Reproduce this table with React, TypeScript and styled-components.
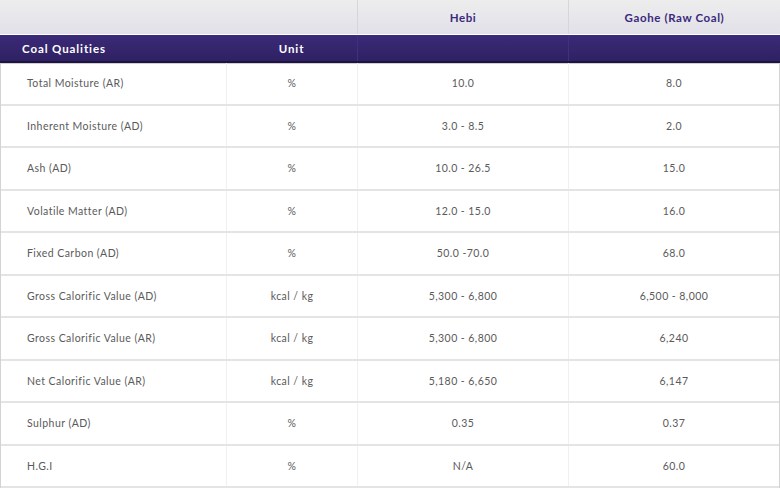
import React from "react";
import styled, { createGlobalStyle } from "styled-components";

const Global = createGlobalStyle`
  html, body { margin: 0; padding: 0; background: #ffffff; }
  body { font-family: "Lato", "Open Sans", sans-serif; }
`;

const cols = "226px 131px 211px 1fr";

const Table = styled.div`
  width: 780px;
  display: flex;
  flex-direction: column;
`;

const TopRow = styled.div`
  display: grid;
  grid-template-columns: ${cols};
  height: 34px;
  background: linear-gradient(#ededed, #e2e0e9);
  border-bottom: 1px solid #ffffff;
`;

const TopCell = styled.div<{ $divider?: boolean }>`
  display: flex;
  align-items: center;
  justify-content: center;
  font-size: 11.5px;
  font-weight: 700;
  color: #3a2a7c;
  letter-spacing: 0.6px;
  border-left: ${(p) => (p.$divider ? "1px solid #d6d4de" : "none")};
`;

const Band = styled.div`
  display: grid;
  grid-template-columns: ${cols};
  height: 26px;
  background: linear-gradient(#3b2a78, #2f2163);
  border-bottom: 2px solid #1d1442;
  box-shadow: 0 1px 0 #cfcfcf;
`;

const BandCell = styled.div<{ $align?: "left" | "center"; $divider?: boolean }>`
  display: flex;
  align-items: center;
  justify-content: ${(p) => (p.$align === "left" ? "flex-start" : "center")};
  padding-left: ${(p) => (p.$align === "left" ? "22px" : "0")};
  font-size: 11.5px;
  font-weight: 700;
  color: #ffffff;
  letter-spacing: 0.9px;
  border-left: ${(p) => (p.$divider ? "1px solid #3f3080" : "none")};
`;

const Body = styled.div`
  display: flex;
  flex-direction: column;
  border-left: 1px solid #d4d4d4;
  border-right: 1px solid #d4d4d4;
`;

const Row = styled.div`
  display: grid;
  grid-template-columns: 225px 131px 211px 1fr;
  height: 40.5px;
  border-bottom: 2px solid #e4e4e4;
`;

const Cell = styled.div<{ $align?: "left" | "center"; $divider?: boolean }>`
  display: flex;
  align-items: center;
  justify-content: ${(p) => (p.$align === "left" ? "flex-start" : "center")};
  padding-left: ${(p) => (p.$align === "left" ? "26px" : "0")};
  font-size: 10.5px;
  color: #5a5a5a;
  letter-spacing: 0.45px;
  border-left: ${(p) => (p.$divider ? "1px solid #f0f0f0" : "none")};
`;

const rows: [string, string, string, string][] = [
  ["Total Moisture (AR)", "%", "10.0", "8.0"],
  ["Inherent Moisture (AD)", "%", "3.0 - 8.5", "2.0"],
  ["Ash (AD)", "%", "10.0 - 26.5", "15.0"],
  ["Volatile Matter (AD)", "%", "12.0 - 15.0", "16.0"],
  ["Fixed Carbon (AD)", "%", "50.0 -70.0", "68.0"],
  ["Gross Calorific Value (AD)", "kcal / kg", "5,300 - 6,800", "6,500 - 8,000"],
  ["Gross Calorific Value (AR)", "kcal / kg", "5,300 - 6,800", "6,240"],
  ["Net Calorific Value (AR)", "kcal / kg", "5,180 - 6,650", "6,147"],
  ["Sulphur (AD)", "%", "0.35", "0.37"],
  ["H.G.I", "%", "N/A", "60.0"],
];

export default function App() {
  return (
    <>
      <Global />
      <Table>
        <TopRow>
          <TopCell />
          <TopCell />
          <TopCell $divider>Hebi</TopCell>
          <TopCell $divider>Gaohe (Raw Coal)</TopCell>
        </TopRow>
        <Band>
          <BandCell $align="left">Coal Qualities</BandCell>
          <BandCell>Unit</BandCell>
          <BandCell $divider />
          <BandCell $divider />
        </Band>
        <Body>
          {rows.map((r) => (
            <Row key={r[0]}>
              <Cell $align="left">{r[0]}</Cell>
              <Cell $divider>{r[1]}</Cell>
              <Cell $divider>{r[2]}</Cell>
              <Cell $divider>{r[3]}</Cell>
            </Row>
          ))}
        </Body>
      </Table>
    </>
  );
}
